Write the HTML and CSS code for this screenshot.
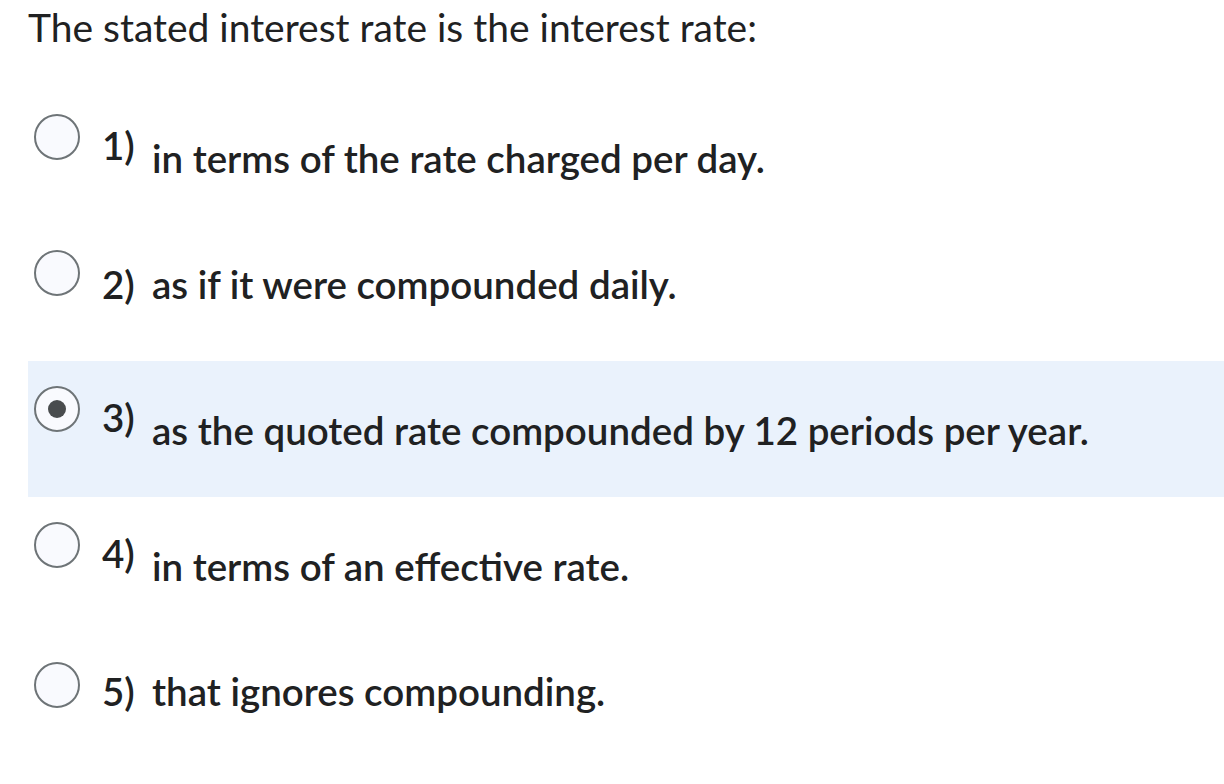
FILE: index.html
```html
<!DOCTYPE html>
<html lang="en">
<head>
<meta charset="utf-8">
<title>Question</title>
<link rel="stylesheet" href="styles.css">
</head>
<body>
<div class="question">
  <div class="title">The stated interest rate is the interest rate:</div>
  <div class="options">
    <div class="option raised">
      <span class="radio"></span>
      <span class="num">1)</span>
      <span class="text">in terms of the rate charged per day.</span>
    </div>
    <div class="option aligned second">
      <span class="radio"></span>
      <span class="num">2)</span>
      <span class="text">as if it were compounded daily.</span>
    </div>
    <div class="option raised selected">
      <span class="radio"><span class="dot"></span></span>
      <span class="num">3)</span>
      <span class="text">as the quoted rate compounded by 12 periods per year.</span>
    </div>
    <div class="option raised">
      <span class="radio"></span>
      <span class="num">4)</span>
      <span class="text">in terms of an effective rate.</span>
    </div>
    <div class="option aligned last">
      <span class="radio"></span>
      <span class="num">5)</span>
      <span class="text">that ignores compounding.</span>
    </div>
  </div>
</div>
</body>
</html>
```

FILE: styles.css
```css
html, body {
  margin: 0;
  padding: 0;
  background: #ffffff;
}

.question {
  padding-left: 28px;
  font-family: Lato, "Noto Sans", sans-serif;
  color: #202122;
}

.title {
  padding-top: 5px;
  font-size: 39px;
  line-height: 44px;
  font-weight: 400;
  height: 84px;
}

.options {
  display: flex;
  flex-direction: column;
}

.option {
  display: flex;
  align-items: flex-start;
  height: 136px;
  font-size: 38.5px;
  line-height: 44px;
  font-weight: 600;
}

.option.selected {
  background: #eaf2fc;
}

.radio {
  box-sizing: border-box;
  width: 46px;
  height: 46px;
  margin-left: 6px;
  margin-top: 25px;
  border: 2px solid #6e7477;
  border-radius: 50%;
  background: #f9fafe;
  display: flex;
  align-items: center;
  justify-content: center;
  flex: none;
}

.dot {
  width: 18px;
  height: 18px;
  border-radius: 50%;
  background: #494c4e;
}

.num {
  width: 50px;
  margin-left: 22px;
  flex: none;
}

.text {
  white-space: nowrap;
}

.raised .num {
  margin-top: 34px;
}

.raised .text {
  margin-top: 47px;
}

.aligned .num,
.aligned .text {
  margin-top: 34px;
}

.aligned.second .num,
.aligned.second .text {
  margin-top: 37px;
}

.last .radio {
  margin-top: 29px;
}

.last .num,
.last .text {
  margin-top: 36px;
}
```
